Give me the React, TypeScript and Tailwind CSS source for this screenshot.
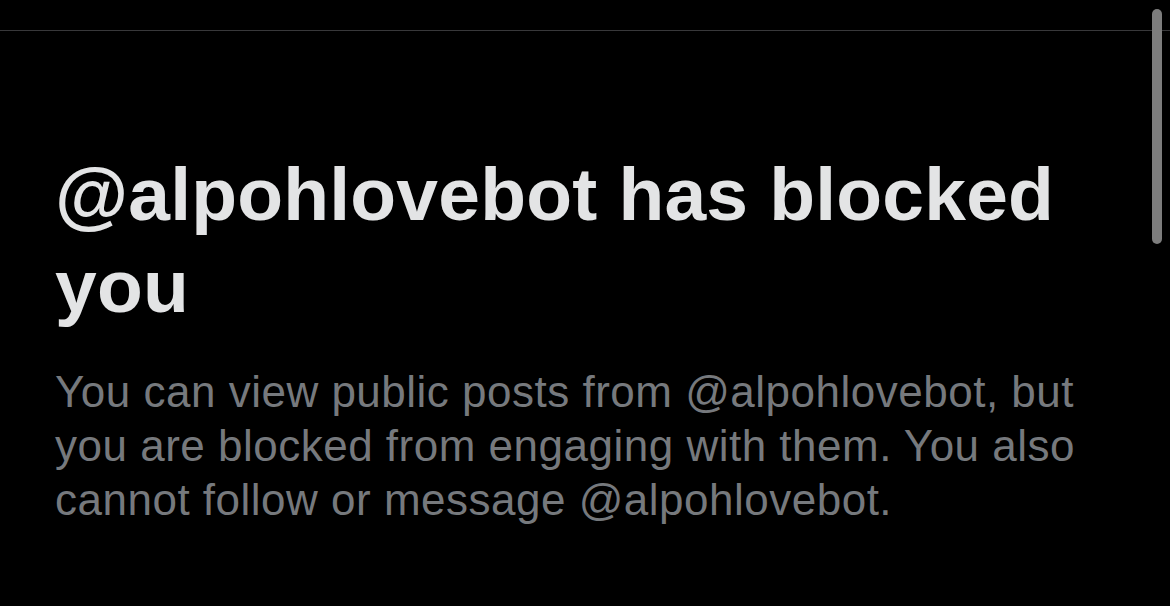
export default function App() {
  return (
    <div className="relative h-[606px] w-[1170px] overflow-hidden bg-black font-['Liberation_Sans',Arial,sans-serif]">
      {/* top divider */}
      <div className="h-[31px] border-b border-[#38383a]" />

      {/* blocked notice */}
      <div className="flex w-[1100px] flex-col gap-[33px] pl-[55px] pt-[117px]">
        <h1 className="text-[75px] font-bold leading-[92px] tracking-[0.2px] text-[#e3e4e5]">
          @alpohlovebot has blocked you
        </h1>
        <p className="text-[44px] leading-[54px] tracking-[0.5px] text-[#76797d]">
          You can view public posts from @alpohlovebot, but you are blocked from engaging with them. You also
          cannot follow or message @alpohlovebot.
        </p>
      </div>

      {/* scrollbar thumb */}
      <div className="absolute left-[1152px] top-[9px] h-[235px] w-[10px] rounded-full bg-[#7d7d7d]" />
    </div>
  );
}
